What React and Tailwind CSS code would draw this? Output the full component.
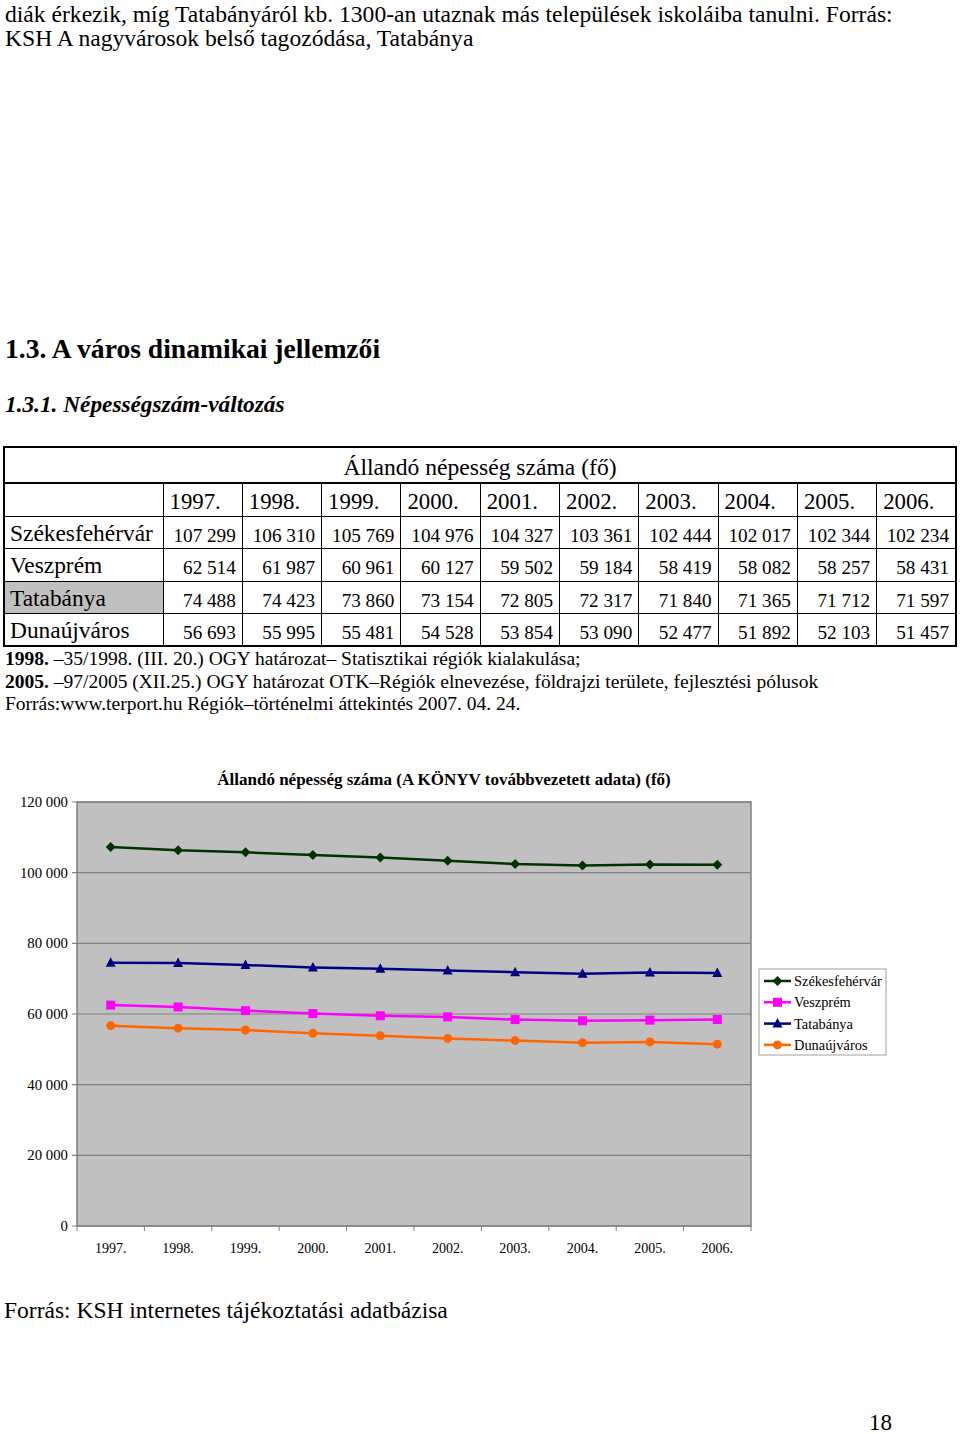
import React from "react";

const YEARS = ["1997.", "1998.", "1999.", "2000.", "2001.", "2002.", "2003.", "2004.", "2005.", "2006."];

const SERIES = [
    {
        name: "Székesfehérvár",
        color: "#003300",
        marker: "diamond",
        values: [107299, 106310, 105769, 104976, 104327, 103361, 102444, 102017, 102344, 102234],
    },
    {
        name: "Veszprém",
        color: "#ff00ff",
        marker: "square",
        values: [62514, 61987, 60961, 60127, 59502, 59184, 58419, 58082, 58257, 58431],
    },
    {
        name: "Tatabánya",
        color: "#000080",
        marker: "triangle",
        values: [74488, 74423, 73860, 73154, 72805, 72317, 71840, 71365, 71712, 71597],
    },
    {
        name: "Dunaújváros",
        color: "#ff6600",
        marker: "circle",
        values: [56693, 55995, 55481, 54528, 53854, 53090, 52477, 51892, 52103, 51457],
    },
];

const fmt = (n) => String(n).replace(/\B(?=(\d{3})+(?!\d))/g, " ");

// plot area in svg coordinates
const PX = 77;
const PW = 674;
const PY = 41;
const PH = 424;
const CAT = PW / 10;

const xAt = (i) => PX + CAT * (i + 0.5);
const yAt = (v) => PY + PH - (v / 120000) * PH;

function Marker({ type, x, y, color }) {
    if (type === "diamond") {
        return <polygon points={`${x},${y - 5} ${x + 5},${y} ${x},${y + 5} ${x - 5},${y}`} fill={color} />;
    }
    if (type === "square") {
        return <rect x={x - 4.5} y={y - 4.5} width="9" height="9" fill={color} />;
    }
    if (type === "triangle") {
        return <polygon points={`${x},${y - 5.5} ${x + 5},${y + 4} ${x - 5},${y + 4}`} fill={color} />;
    }
    return <circle cx={x} cy={y} r="4.5" fill={color} />;
}

function Chart() {
    const grid = [0, 20000, 40000, 60000, 80000, 100000, 120000];
    return (
        <svg width="960" height="510" className="block" style={{ fontFamily: '"Liberation Serif", serif' }}>
            <text x="444" y="24" textAnchor="middle" fontSize="17" fontWeight="bold" fill="#000">
                Állandó népesség száma (A KÖNYV továbbvezetett adata) (fő)
            </text>
            <rect x={PX} y={PY} width={PW} height={PH} fill="#c0c0c0" stroke="#808080" strokeWidth="1.5" />
            {grid.map((g) => (
                <g key={g}>
                    <line x1={PX - 5} x2={PX + PW} y1={yAt(g)} y2={yAt(g)} stroke="#808080" strokeWidth="1.2" />
                    <text x="68" y={yAt(g) + 5} textAnchor="end" fontSize="14.8" fill="#000">
                        {fmt(g)}
                    </text>
                </g>
            ))}
            {Array.from({ length: 11 }).map((_, i) => (
                <line key={i} x1={PX + CAT * i} x2={PX + CAT * i} y1={PY + PH} y2={PY + PH + 5} stroke="#808080" />
            ))}
            {YEARS.map((y, i) => (
                <text key={y} x={xAt(i)} y="492" textAnchor="middle" fontSize="14" fill="#000">
                    {y}
                </text>
            ))}
            {SERIES.map((s) => (
                <g key={s.name}>
                    <polyline
                        points={s.values.map((v, i) => `${xAt(i)},${yAt(v)}`).join(" ")}
                        fill="none"
                        stroke={s.color}
                        strokeWidth="2.5"
                    />
                    {s.values.map((v, i) => (
                        <Marker key={i} type={s.marker} x={xAt(i)} y={yAt(v)} color={s.color} />
                    ))}
                </g>
            ))}
            <rect x="759" y="208" width="127" height="86" fill="#fff" stroke="#a0a0a0" />
            {SERIES.map((s, i) => {
                const cy = 220 + i * 21.3;
                return (
                    <g key={s.name}>
                        <line x1="764" x2="791" y1={cy} y2={cy} stroke={s.color} strokeWidth="2.5" />
                        <Marker type={s.marker} x={777.5} y={cy} color={s.color} />
                        <text x="794" y={cy + 5} fontSize="14.4" fill="#000">
                            {s.name}
                        </text>
                    </g>
                );
            })}
        </svg>
    );
}

function App() {
    const rows = ["Székesfehérvár", "Veszprém", "Tatabánya", "Dunaújváros"];
    return (
        <div className="w-[960px] h-[1434px] bg-white text-black font-['Liberation_Serif',serif] flex flex-col">
            <p className="pt-[2px] px-[5px] text-[23.6px] leading-[24px]">
                diák érkezik, míg Tatabányáról kb. 1300-an utaznak más települések iskoláiba tanulni. Forrás:
                <br />
                KSH A nagyvárosok belső tagozódása, Tatabánya
            </p>

            <h2 className="mt-[284px] px-[5px] text-[27.6px] leading-[30px] font-bold">1.3. A város dinamikai jellemzői</h2>
            <h3 className="mt-[27px] px-[5px] text-[23.3px] leading-[26px] font-bold italic">1.3.1. Népességszám-változás</h3>

            <table className="mt-[29px] ml-[3px] w-[954px] border-collapse border-2 border-black table-fixed">
                <colgroup>
                    <col className="w-[159px]" />
                    {YEARS.map((y) => (
                        <col key={y} />
                    ))}
                </colgroup>
                <tbody>
                    <tr>
                        <td colSpan={11} className="h-[36px] p-0 pt-[4px] text-center text-[23.6px] leading-[24px] border-b-2 border-black">
                            Állandó népesség száma (fő)
                        </td>
                    </tr>
                    <tr>
                        <td className="h-[33px] p-0 border border-black"></td>
                        {YEARS.map((y) => (
                            <td key={y} className="p-0 pl-[6px] pt-[5px] border border-black text-[22.8px] leading-[24px]">
                                {y}
                            </td>
                        ))}
                    </tr>
                    {rows.map((name, r) => (
                        <tr key={name}>
                            <td
                                className={`h-[32.5px] p-0 pl-[5px] pt-[1px] border border-black text-[23.4px] leading-[24px] ${
                                    r === 2 ? "bg-[#c0c0c0]" : ""
                                }`}
                            >
                                {name}
                            </td>
                            {SERIES[r].values.map((v, i) => (
                                <td key={i} className="p-0 pr-[6px] pt-[7px] border border-black text-[19.2px] leading-[22px] text-right">
                                    {fmt(v)}
                                </td>
                            ))}
                        </tr>
                    ))}
                </tbody>
            </table>

            <div className="mt-[1px] px-[5px] text-[19.5px] leading-[22.5px]">
                <p>
                    <b>1998.</b> –35/1998. (III. 20.) OGY határozat– Statisztikai régiók kialakulása;
                </p>
                <p>
                    <b>2005.</b> –97/2005 (XII.25.) OGY határozat OTK–Régiók elnevezése, földrajzi területe, fejlesztési
                    pólusok
                </p>
                <p>Forrás:www.terport.hu Régiók–történelmi áttekintés 2007. 04. 24.</p>
            </div>

            <div className="mt-[45px]">
                <Chart />
            </div>

            <p className="mt-[26px] px-[4px] text-[23.5px] leading-[26px]">Forrás: KSH internetes tájékoztatási adatbázisa</p>

            <p className="mt-auto mb-0 pr-[68px] text-right text-[23px] leading-[22px]">18</p>
        </div>
    );
}

export default App;
